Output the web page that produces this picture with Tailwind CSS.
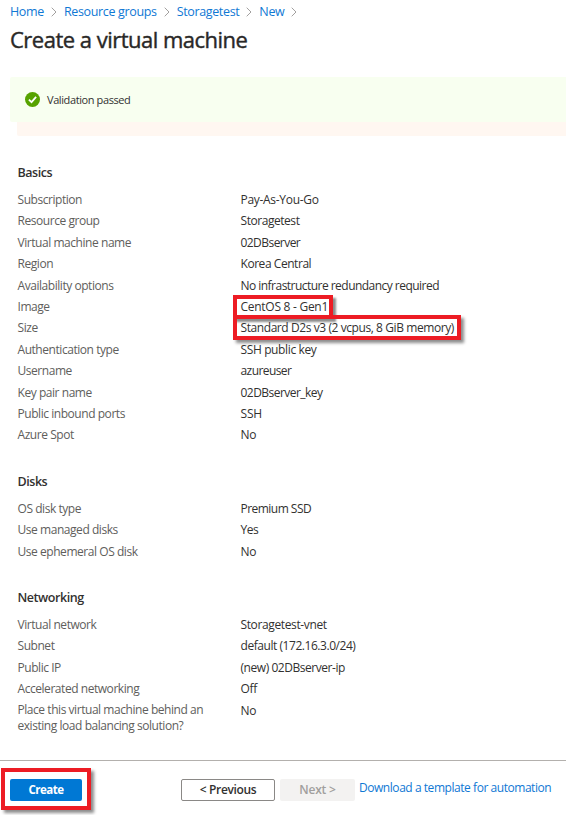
<!DOCTYPE html>
<html lang="en">
<head>
<meta charset="utf-8">
<title>Create a virtual machine</title>
<script src="https://cdn.jsdelivr.net/npm/@tailwindcss/browser@4"></script>
</head>
<body class="relative h-[815px] w-[566px] overflow-hidden bg-white font-['Open_Sans','Noto_Sans',sans-serif] text-[12px] tracking-[-0.45px] text-[#323130]">
<div class="flex h-full flex-col">
  <nav class="flex h-[23px] items-center gap-[7px] pt-[1px] pl-[10px] text-[12.5px] tracking-[-0.35px] text-[#0f78d4]">
    <a>Home</a>
    <svg class="h-[10px] w-[6px]" viewBox="0 0 6 10" fill="none" stroke="#8a8886" stroke-width=".8"><path d="M.7 .7L5 5L.7 9.3"/></svg>
    <a>Resource groups</a>
    <svg class="h-[10px] w-[6px]" viewBox="0 0 6 10" fill="none" stroke="#8a8886" stroke-width=".8"><path d="M.7 .7L5 5L.7 9.3"/></svg>
    <a>Storagetest</a>
    <svg class="h-[10px] w-[6px]" viewBox="0 0 6 10" fill="none" stroke="#8a8886" stroke-width=".8"><path d="M.7 .7L5 5L.7 9.3"/></svg>
    <a>New</a>
    <svg class="h-[10px] w-[6px]" viewBox="0 0 6 10" fill="none" stroke="#8a8886" stroke-width=".8"><path d="M.7 .7L5 5L.7 9.3"/></svg>
  </nav>
  <h1 class="h-[54px] pl-[10px] text-[22px] leading-[32px] tracking-[-0.51px] text-[#292827] [-webkit-text-stroke:0.4px_#292827]">Create a virtual machine</h1>
  <div class="ml-[10px] flex h-[45px] items-center gap-[7px] rounded-l-[2px] bg-[#f8fff0] pl-[15px] text-[11px] tracking-[-0.4px]">
    <svg class="h-[15px] w-[15px]" viewBox="0 0 15 15"><circle cx="7.5" cy="7.5" r="7.5" fill="#57a300"/><path d="M3.9 7.6L6.5 10.1L11.1 4.9" fill="none" stroke="#fff" stroke-width="1.8"/></svg>
    <span class="pt-[2px]">Validation passed</span>
  </div>
  <div class="ml-[17px] h-[14px] shrink-0 rounded-bl-[2px] bg-[#fff7f1]"></div>

  <main class="flex h-[624px] flex-col pt-[27px] pl-[17.5px]">
    <section class="h-[309px]">
      <h2 class="mb-[6px] h-[20px] text-[12.5px] leading-[20px] font-semibold">Basics</h2>
      <dl class="grid auto-rows-[21.4px] grid-cols-[223px_1fr] leading-[21.4px] [&_dt]:text-[#605e5c]">
        <dt>Subscription</dt><dd class="tracking-[-0.3px]">Pay-As-You-Go</dd>
        <dt>Resource group</dt><dd>Storagetest</dd>
        <dt>Virtual machine name</dt><dd class="tracking-[-0.55px]">02DBserver</dd>
        <dt>Region</dt><dd>Korea Central</dd>
        <dt>Availability options</dt><dd class="tracking-[-0.53px]">No infrastructure redundancy required</dd>
        <dt>Image</dt><dd class="tracking-[-0.27px]">CentOS 8 - Gen1</dd>
        <dt>Size</dt><dd class="tracking-[-0.42px]">Standard D2s v3 (2 vcpus, 8 GiB memory)</dd>
        <dt>Authentication type</dt><dd class="tracking-[-0.37px]">SSH public key</dd>
        <dt>Username</dt><dd class="tracking-[-0.58px]">azureuser</dd>
        <dt>Key pair name</dt><dd class="tracking-[-0.54px]">02DBserver_key</dd>
        <dt>Public inbound ports</dt><dd class="tracking-[-0.2px]">SSH</dd>
        <dt>Azure Spot</dt><dd class="tracking-[-0.2px]">No</dd>
      </dl>
    </section>
    <section class="h-[116px]">
      <h2 class="mb-[6px] h-[20px] text-[12.5px] leading-[20px] font-semibold">Disks</h2>
      <dl class="grid auto-rows-[21.4px] grid-cols-[223px_1fr] leading-[21.4px] [&_dt]:text-[#605e5c]">
        <dt>OS disk type</dt><dd class="tracking-[-0.53px]">Premium SSD</dd>
        <dt>Use managed disks</dt><dd>Yes</dd>
        <dt>Use ephemeral OS disk</dt><dd class="tracking-[-0.2px]">No</dd>
      </dl>
    </section>
    <section>
      <h2 class="mb-[6px] h-[20px] text-[12.5px] leading-[20px] font-semibold">Networking</h2>
      <dl class="grid auto-rows-[21.4px] grid-cols-[223px_1fr] leading-[21.4px] [&_dt]:text-[#605e5c]">
        <dt>Virtual network</dt><dd class="tracking-[-0.37px]">Storagetest-vnet</dd>
        <dt>Subnet</dt><dd>default (172.16.3.0/24)</dd>
        <dt>Public IP</dt><dd>(new) 02DBserver-ip</dd>
        <dt>Accelerated networking</dt><dd class="tracking-[-0.3px]">Off</dd>
        <dt class="pt-[2px] leading-[16px] whitespace-nowrap">Place this virtual machine behind an<br>existing load balancing solution?</dt><dd class="tracking-[-0.2px]">No</dd>
      </dl>
    </section>
  </main>

  <footer class="flex h-[55px] border-t border-[#b3b0ad] pt-[18px] pl-[10px] leading-[22px]">
    <button class="h-[22px] w-[72px] rounded-[2px] bg-[#0078d4] text-[11.5px] font-bold tracking-[-0.5px] text-white">Create</button>
    <button class="ml-[99px] h-[22px] w-[94px] rounded-[2px] border border-[#8a8886] leading-[20px] font-semibold tracking-[-0.35px]">&lt; Previous</button>
    <button class="ml-[5px] h-[22px] w-[75px] rounded-[2px] bg-[#f3f2f1] font-semibold tracking-[-0.2px] text-[#a19f9d]">Next &gt;</button>
    <a class="ml-[4px] -mt-[2px] whitespace-nowrap text-[#0f78d4]">Download a template for automation</a>
  </footer>
</div>

<!-- Highlight frames over the content -->
<div class="absolute top-[295px] left-[233px] h-[24px] w-[100px] border-4 border-[#ed1c24] shadow-[3px_3px_2px_rgba(0,0,0,0.45)]"></div>
<div class="absolute top-[315px] left-[233px] h-[25px] w-[228px] border-4 border-[#ed1c24] shadow-[3px_3px_3px_rgba(0,0,0,0.45)]"></div>
<div class="absolute top-[768px] left-[1px] h-[42px] w-[90px] border-4 border-[#ed1c24] shadow-[3px_3px_3px_rgba(0,0,0,0.45)]"></div>
</body>
</html>
